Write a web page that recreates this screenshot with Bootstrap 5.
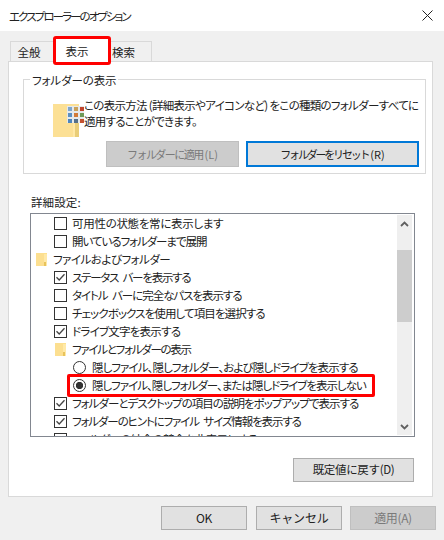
<!DOCTYPE html>
<html lang="ja">
<head>
<meta charset="utf-8">
<title>エクスプローラーのオプション</title>
<link href="https://cdn.jsdelivr.net/npm/bootstrap@5.3.0/dist/css/bootstrap.min.css" rel="stylesheet">
<style>
html,body{width:444px;height:540px;overflow:hidden;margin:0}
body{background:#f0f0f0;color:#222;font-family:"Noto Sans CJK JP",sans-serif;font-size:11.5px;line-height:18px;font-feature-settings:"palt";}
.winbar{height:31px;background:#fff;padding:0 11px 0 9px;letter-spacing:-1.9px}
.tabstrip{height:30px;padding:5px 0 0 10px;border:0;align-items:flex-end;flex-wrap:nowrap}
.tabstrip .nav-link{color:#222;font-size:11.5px;border:1px solid #d9d9d9;border-bottom:0;border-radius:0;background:#f0f0f0;height:20px;padding:0;display:flex;align-items:center;justify-content:center;margin:0}
.tabstrip .tabone{width:44px;padding-right:6px}
.tabstrip .nav-link.tabactive{width:58px;height:29px;background:#fff;border:3px solid #f00;border-radius:3px;position:relative;z-index:2;margin:0 -1px -4px -1px;padding:0 10px 0 0;color:#222}
.tabstrip .tabthree{width:42px;padding-right:15px}
.sheet{position:relative;margin:0 11px 0 8px;height:436px;background:#fff;border:1px solid #d9d9d9;padding:17px 7px 0 14px}
.groupframe{position:relative;height:95px;width:403px;border:1px solid #d9d9d9;padding:17px 5px 0 29px}
.grouplegend{position:absolute;left:6px;top:-9px;background:#fff;padding:0 2px;letter-spacing:-.1px}
.foldbig{width:31px;height:34px;flex:none;margin-top:7px}
.introtext{width:340px;letter-spacing:-.7px;line-height:16px;white-space:nowrap}
.winbtn{font-size:12px;line-height:1;height:26px;padding:0;border-radius:0;background:#e1e1e1;border:1px solid #adadad;color:#222;letter-spacing:-.35px}
.winbtn:hover{background:#e1e1e1;color:#222;border-color:#adadad}
.winbtn:disabled{background:#ccc;border-color:#bfbfbf;color:#7a7a7a;opacity:1}
.btnapply{width:133px;margin-left:53px;margin-top:3px;font-size:11px;letter-spacing:-1.55px}
.btnreset{width:173px;margin-left:7px;margin-top:3px;border:2px solid #0078d7;font-size:11px;letter-spacing:-2.2px}
.btnreset:hover{border-color:#0078d7}
.latinkey{letter-spacing:0;margin-left:2px}
.fieldlabel{margin:18px 0 0 8px;height:21px;line-height:20px;letter-spacing:.1px}
.treebox{position:relative;width:385px;height:224px;margin-left:7px;border:1px solid #828790;background:#fff;overflow:hidden;padding:0 1px}
.treerows{width:366px;height:222px;overflow:hidden;background:transparent;border-radius:0}
.treerows .list-group-item{border:0;padding:0;background:transparent;color:#222;height:18px;line-height:18px;display:flex;align-items:center;white-space:nowrap;overflow:visible;flex:none;font-size:11.5px}
.lvl0{padding-left:4px!important}
.lvl1{padding-left:22px!important}
.lvl1f{padding-left:23px!important}
.lvl2{padding-left:41px!important}
.smallfold{width:11px;height:15px;flex:none;margin-right:6px}
.chk{flex:none;width:13px;height:13px;margin:0 5px 0 0;border:1px solid #333;border-radius:0!important;background-color:#fff;appearance:none;display:block}
.chk:checked{background-color:#fff;border-color:#333;background-image:url("data:image/svg+xml,%3Csvg xmlns='http://www.w3.org/2000/svg' viewBox='0 0 13 13'%3E%3Cpath d='M2.5 6.2 5.2 9 10.5 3.2' fill='none' stroke='%23444' stroke-width='1.3'/%3E%3C/svg%3E");background-size:13px 13px}
.rad{flex:none;width:13px;height:13px;margin:0 6px 0 0;border:1px solid #333;border-radius:50%!important;background-color:#fff;appearance:none;display:block}
.rad:checked{background-color:#fff;border-color:#333;background-image:radial-gradient(circle,#333 0 3.4px,transparent 3.9px)}
.sq1{letter-spacing:-.3px}
.sq2{letter-spacing:-1.05px}
.sq3{letter-spacing:-.5px}
.sq4{letter-spacing:-1.25px;word-spacing:3px}
.sq5{letter-spacing:-1.05px;word-spacing:3px}
.sq6{letter-spacing:-.9px}
.sq7{letter-spacing:-.75px}
.sq8{letter-spacing:-1.26px}
.sq9{letter-spacing:-.9px}
.sq9b{letter-spacing:-1px}
.sq10{letter-spacing:-.97px}
.sq11{letter-spacing:-1.12px;word-spacing:3px}
.sq12{letter-spacing:-.6px}
.vbar{position:absolute;top:1px;right:2px;bottom:1px;width:15px;background:#efefef;padding:0}
.vbtn{height:17px;flex:none}
.vtrack{flex:1 1 auto;padding-top:18px}
.vthumb{height:72px;background:#cdcdcd}
.hilite{position:absolute;left:36px;top:160px;width:308px;height:23px;border:3px solid #f00;border-radius:2px;pointer-events:none}
.defrow{width:391px;margin-top:21px}
.btndefault{width:121px;height:24px;font-size:11.5px;letter-spacing:-.33px}
.actionbar{padding:9px 8px 0 161px}
.actionbar .winbtn{width:86px;height:24px}
.actionbar .gapnudge{margin-left:1px;letter-spacing:-.2px}
</style>
</head>
<body class="d-flex flex-column">
<svg width="0" height="0" class="d-block" aria-hidden="true"><defs>
<symbol id="smallfolder" viewBox="0 0 11 15"><rect x="0" y="1" width="11" height="13" fill="#fde18d"/><rect x="0" y="1" width="8" height="13" fill="#fcdf90"/><rect x="8" y="2" width="3" height="12" fill="#ffe9a8"/><rect x="8" y="10" width="2" height="4" fill="#e8c35b"/></symbol>
</defs></svg>
<div class="winbar d-flex align-items-center justify-content-between">
  <span>エクスプローラーのオプション</span>
  <svg width="11" height="11" viewBox="0 0 11 11" aria-label="閉じる"><path d="M.5.5l10 10M10.5.5l-10 10" stroke="#222" stroke-width="1" fill="none"/></svg>
</div>
<ul class="nav nav-tabs tabstrip">
  <li class="nav-item"><a class="nav-link tabone">全般</a></li>
  <li class="nav-item"><a class="nav-link active tabactive">表示</a></li>
  <li class="nav-item"><a class="nav-link tabthree">検索</a></li>
</ul>
<div class="sheet">
  <div class="groupframe">
    <div class="grouplegend">フォルダーの表示</div>
    <div class="d-flex">
      <svg class="foldbig" viewBox="0 0 31 34" aria-hidden="true">
        <rect x="0" y="0" width="26" height="33" fill="#fce095"/>
        <rect x="20" y="3" width="6" height="30" fill="#ffe8a6"/>
        <rect x="22" y="18" width="4" height="15" fill="#e9cd78"/>
        <rect x="14" y="2" width="17" height="17" fill="#e6e9eb"/>
        <g>
          <rect x="15" y="3" width="4" height="4" fill="#7fa6cc"/><rect x="21" y="3" width="4" height="4" fill="#c9a15a"/><rect x="27" y="3" width="4" height="4" fill="#c1442c"/>
          <rect x="15" y="9" width="4" height="4" fill="#5d8fc0"/><rect x="21" y="9" width="4" height="4" fill="#d27a36"/><rect x="27" y="9" width="4" height="4" fill="#6f9a58"/>
          <rect x="15" y="15" width="4" height="4" fill="#4d85bb"/><rect x="21" y="15" width="4" height="4" fill="#55708a"/><rect x="27" y="15" width="4" height="4" fill="#c4512f"/>
        </g>
      </svg>
      <div class="introtext">この表示方法 (詳細表示やアイコンなど) をこの種類のフォルダーすべてに<br>適用することができます。</div>
    </div>
    <div class="d-flex">
      <button type="button" class="btn winbtn btnapply" disabled>フォルダーに適用<span class="latinkey">(L)</span></button>
      <button type="button" class="btn winbtn btnreset">フォルダーをリセット<span class="latinkey">(R)</span></button>
    </div>
  </div>
  <div class="fieldlabel">詳細設定:</div>
  <div class="treebox">
    <ul class="list-group list-group-flush treerows">
      <li class="list-group-item lvl1"><input class="form-check-input chk" type="checkbox" aria-label="可用性"><span class="sq1">可用性の状態を常に表示します</span></li>
      <li class="list-group-item lvl1"><input class="form-check-input chk" type="checkbox" aria-label="展開"><span class="sq2">開いているフォルダーまで展開</span></li>
      <li class="list-group-item lvl0"><svg class="smallfold"><use href="#smallfolder"/></svg><span class="sq3">ファイルおよびフォルダー</span></li>
      <li class="list-group-item lvl1"><input class="form-check-input chk" type="checkbox" checked aria-label="ステータス"><span class="sq4">ステータス バーを表示する</span></li>
      <li class="list-group-item lvl1"><input class="form-check-input chk" type="checkbox" aria-label="タイトル"><span class="sq5">タイトル バーに完全なパスを表示する</span></li>
      <li class="list-group-item lvl1"><input class="form-check-input chk" type="checkbox" aria-label="チェック"><span class="sq6">チェックボックスを使用して項目を選択する</span></li>
      <li class="list-group-item lvl1"><input class="form-check-input chk" type="checkbox" checked aria-label="ドライブ"><span class="sq7">ドライブ文字を表示する</span></li>
      <li class="list-group-item lvl1f"><svg class="smallfold"><use href="#smallfolder"/></svg><span class="sq8">ファイルとフォルダーの表示</span></li>
      <li class="list-group-item lvl2"><input class="form-check-input rad" type="radio" name="hid" aria-label="表示する"><span class="sq9">隠しファイル、隠しフォルダー、および隠しドライブを表示する</span></li>
      <li class="list-group-item lvl2"><input class="form-check-input rad" type="radio" name="hid" checked aria-label="表示しない"><span class="sq9b">隠しファイル、隠しフォルダー、または隠しドライブを表示しない</span></li>
      <li class="list-group-item lvl1"><input class="form-check-input chk" type="checkbox" checked aria-label="説明"><span class="sq10">フォルダーとデスクトップの項目の説明をポップアップで表示する</span></li>
      <li class="list-group-item lvl1"><input class="form-check-input chk" type="checkbox" checked aria-label="ヒント"><span class="sq11">フォルダーのヒントにファイル サイズ情報を表示する</span></li>
      <li class="list-group-item lvl1"><input class="form-check-input chk" type="checkbox" aria-label="結合"><span class="sq12">フォルダーの結合の競合を非表示にする</span></li>
    </ul>
    <div class="vbar d-flex flex-column">
      <div class="vbtn d-flex align-items-center justify-content-center"><svg width="9" height="6" viewBox="0 0 9 6" aria-hidden="true"><path d="M1 5l3.5-3.5L8 5" fill="none" stroke="#606060" stroke-width="1.8"/></svg></div>
      <div class="vtrack"><div class="vthumb"></div></div>
      <div class="vbtn d-flex align-items-center justify-content-center"><svg width="9" height="6" viewBox="0 0 9 6" aria-hidden="true"><path d="M1 1l3.5 3.5L8 1" fill="none" stroke="#606060" stroke-width="1.8"/></svg></div>
    </div>
    <div class="hilite"></div>
  </div>
  <div class="defrow d-flex justify-content-end">
    <button type="button" class="btn winbtn btndefault">既定値に戻す(D)</button>
  </div>
</div>
<div class="actionbar d-flex gap-2">
  <button type="button" class="btn winbtn">OK</button>
  <button type="button" class="btn winbtn gapnudge">キャンセル</button>
  <button type="button" class="btn winbtn" disabled>適用(A)</button>
</div>
<script src="https://cdn.jsdelivr.net/npm/bootstrap@5.3.0/dist/js/bootstrap.bundle.min.js"></script>
</body>
</html>
